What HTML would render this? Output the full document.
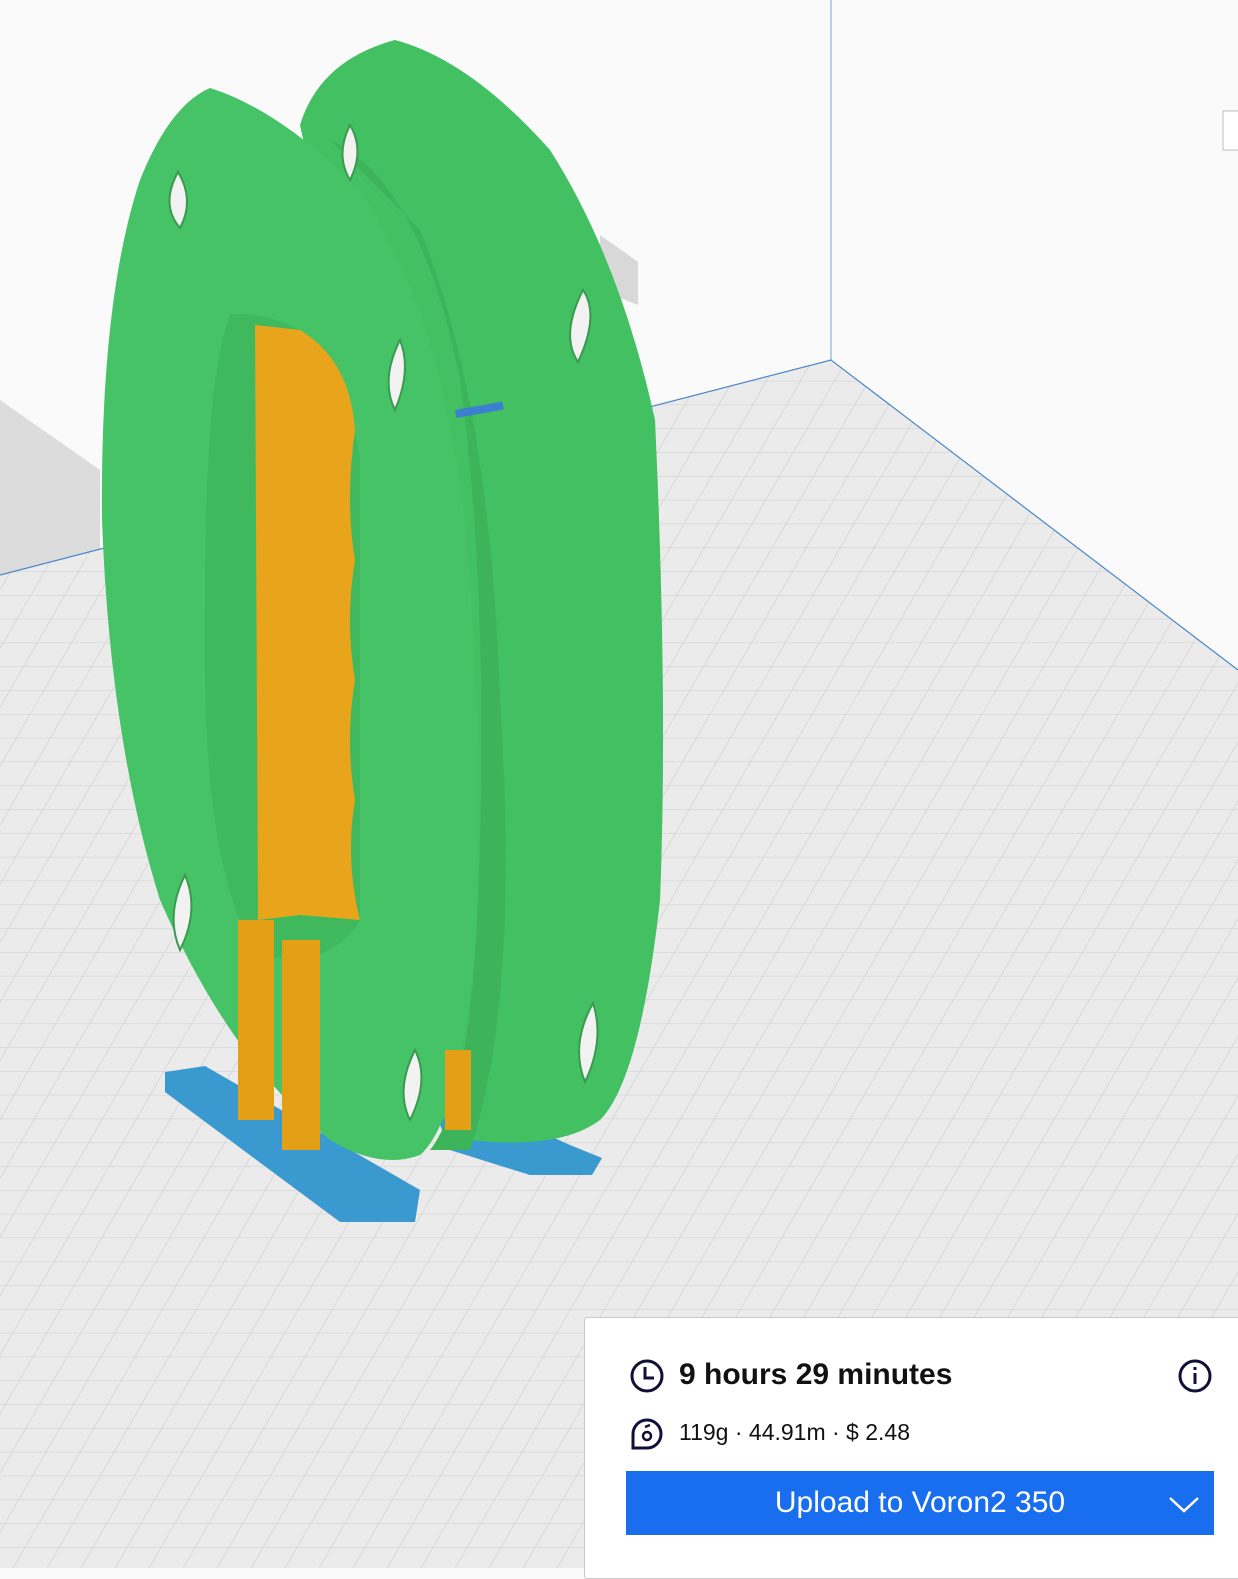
<!DOCTYPE html>
<html><head><meta charset="utf-8"><style>
html,body{margin:0;padding:0;width:1238px;height:1568px;overflow:hidden;background:#fafafa;font-family:"Liberation Sans",sans-serif}
svg{position:absolute;left:0;top:0}
.panel{position:absolute;left:584px;top:1317px;width:660px;height:260px;background:#fff;border:1px solid #c8c8c8;border-radius:3px}
.t1{position:absolute;left:94px;top:40px;font-size:30px;font-weight:bold;color:#111}
.t2{position:absolute;left:94px;top:101px;font-size:23px;color:#111}
.btn{position:absolute;left:41px;top:153px;width:588px;height:64px;background:#196ef0;color:#fff;font-size:30px;line-height:64px;text-align:center}
</style></head><body>
<svg width="1238" height="1568" viewBox="0 0 1238 1568">
<defs>
<pattern id="g" width="34" height="34" patternUnits="userSpaceOnUse" patternTransform="skewX(-30) scale(1,0.7)">
<rect width="34" height="34" fill="#ebebeb"/>
<path d="M0 0H34M0 0V34" stroke="#d0d0d0" stroke-width="1.5"/>
</pattern>
</defs>
<rect width="1238" height="1568" fill="#fafafa"/>
<polygon points="0,575 831,360 1238,670 1238,1568 0,1568" fill="url(#g)"/>
<polygon points="0,400 100,470 100,550 0,575" fill="#dcdcdc"/>
<line x1="831" y1="0" x2="831" y2="360" stroke="#6aa9d8" stroke-width="1"/>
<polyline points="0,575 831,360 1238,670" fill="none" stroke="#4a86c8" stroke-width="1.2"/>
<polygon points="600,235 638,262 638,305 600,290" fill="#d8d8d8"/>
<polygon points="322,92 340,92 340,120 322,120" fill="#d8d8d8"/>
<!-- feet -->
<polygon points="165,1072 205,1066 420,1190 415,1222 340,1222 165,1092" fill="#3a9ad0"/>
<polygon points="430,1100 470,1100 570,1145 602,1158 592,1175 530,1175 450,1150" fill="#3a9ad0"/>
<!-- back disc -->
<path d="M300,125 Q320,60 395,40 Q470,60 550,150 Q620,260 655,420 Q668,700 660,900 Q640,1080 600,1120 Q560,1150 470,1140 L420,1100 Q350,800 360,400 Z" fill="#43c062"/>
<path d="M330,140 Q420,180 460,380 Q490,600 478,900 Q470,1100 430,1150 L470,1150 Q520,1000 500,700 Q490,400 420,230 Z" fill="#3db45a"/>
<!-- front disc -->
<path d="M210,88 Q280,110 360,190 Q430,290 460,480 Q485,700 475,950 Q460,1120 420,1155 Q380,1170 330,1140 Q230,1060 160,900 Q110,740 102,520 Q100,300 140,180 Q170,105 210,88 Z" fill="#45c366"/>
<path d="M230,315 Q260,310 300,330 Q350,380 360,460 L360,920 Q330,970 260,955 Q200,880 205,600 Q205,380 230,315Z" fill="#3fb85e"/>
<path d="M255,325 L300,330 Q350,360 355,430 Q345,500 355,560 Q345,620 355,680 Q345,740 355,800 Q345,860 360,920 L300,915 L258,920 Z" fill="#e8a41a"/>
<rect x="238" y="920" width="36" height="200" fill="#e3a017"/>
<rect x="282" y="940" width="38" height="210" fill="#e3a017"/>
<rect x="445" y="1050" width="26" height="80" fill="#e3a017"/>
<g fill="#f2f2f2" stroke="#3a9a50" stroke-width="2">
<path d="M178,172 Q195,200 180,228 Q160,205 178,172Z"/>
<path d="M350,125 Q365,150 350,180 Q335,155 350,125Z"/>
<path d="M583,290 Q600,315 578,362 Q560,335 583,290Z"/>
<path d="M400,340 Q412,370 395,410 Q380,380 400,340Z"/>
<path d="M185,875 Q200,910 180,950 Q165,915 185,875Z"/>
<path d="M593,1003 Q605,1040 585,1082 Q570,1045 593,1003Z"/>
<path d="M415,1050 Q430,1080 410,1120 Q395,1090 415,1050Z"/>
</g>
<rect x="455" y="410" width="48" height="8" fill="#3a7fd0" transform="rotate(-10 455 410)"/>
<rect x="1223" y="111" width="20" height="39" fill="#fff" stroke="#bbb"/>
</svg>
<div class="panel">
<svg width="40" height="40" style="left:42px;top:38px" viewBox="0 0 40 40"><circle cx="20" cy="20" r="15" fill="none" stroke="#0f0f3a" stroke-width="3"/><path d="M18 11V22H27" fill="none" stroke="#0f0f3a" stroke-width="3"/></svg>
<div class="t1">9 hours 29 minutes</div>
<svg width="40" height="40" style="left:590px;top:38px" viewBox="0 0 40 40"><circle cx="20" cy="20" r="15" fill="none" stroke="#0f0f3a" stroke-width="3"/><rect x="18.5" y="17" width="3" height="11" fill="#0f0f3a"/><rect x="18.5" y="11" width="3" height="3" fill="#0f0f3a"/></svg>
<svg width="40" height="40" style="left:42px;top:96px" viewBox="0 0 40 40"><path d="M6 34V20A14 14 0 1 1 20 34Z" fill="none" stroke="#0f0f3a" stroke-width="3"/><circle cx="20" cy="22" r="4" fill="none" stroke="#0f0f3a" stroke-width="2.5"/><path d="M18 13l5 -2" stroke="#0f0f3a" stroke-width="2.5"/></svg>
<div class="t2">119g · 44.91m · $ 2.48</div>
<div class="btn">Upload to Voron2 350</div>
<svg width="34" height="20" style="left:582px;top:177px" viewBox="0 0 34 20"><path d="M3 3L17 16L31 3" fill="none" stroke="#fff" stroke-width="2.5"/></svg>
</div>
</body></html>
